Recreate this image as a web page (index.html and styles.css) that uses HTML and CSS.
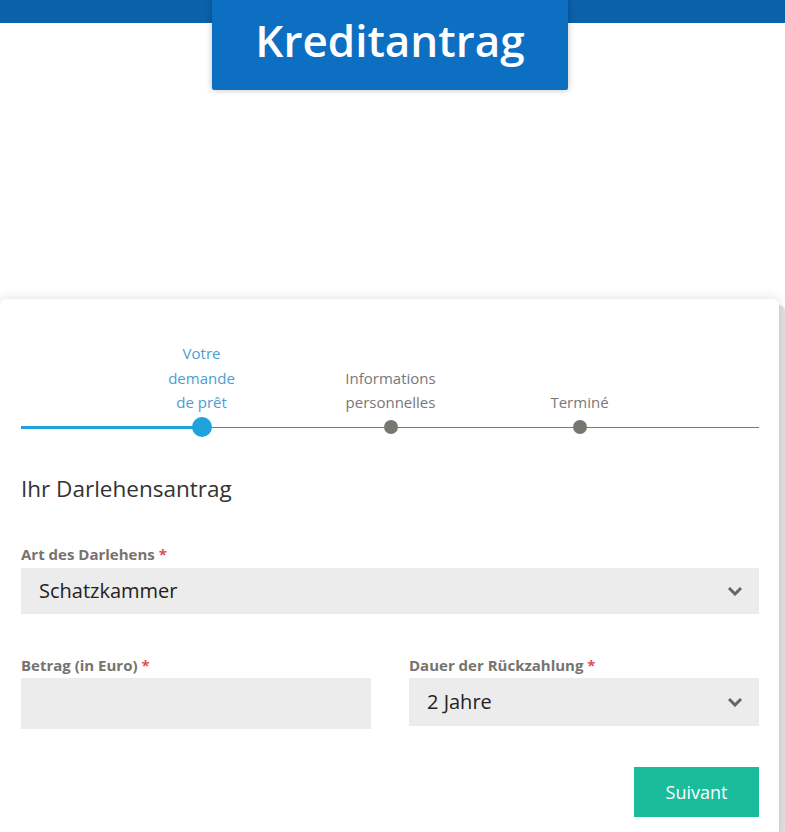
FILE: index.html
```html
<!DOCTYPE html>
<html lang="de">
<head>
    <meta charset="UTF-8">
    <meta name="viewport" content="width=device-width, initial-scale=1.0">
    <title>Kreditantrag</title>
    <link rel="stylesheet" href="styles.css">
</head>
<body>
    <div class="header">
        <h1 class="title-box">Kreditantrag</h1>
    </div>
    <div class="card">
        <div class="stepper">
            <div class="step active">
                <span class="step-label">Votre<br>demande<br>de prêt</span>
                <span class="dot-wrap"><span class="dot"></span></span>
            </div>
            <div class="step">
                <span class="step-label">Informations<br>personnelles</span>
                <span class="dot-wrap"><span class="dot"></span></span>
            </div>
            <div class="step">
                <span class="step-label">Terminé</span>
                <span class="dot-wrap"><span class="dot"></span></span>
            </div>
        </div>

        <h2 class="form-title">Ihr Darlehensantrag</h2>

        <div class="field">
            <label>Art des Darlehens <span class="req">*</span></label>
            <div class="select">
                <span>Schatzkammer</span>
                <svg class="chevron" width="16" height="10" viewBox="0 0 16 10"><path d="M2 2 L8 8 L14 2" fill="none" stroke="#666" stroke-width="3"/></svg>
            </div>
        </div>

        <div class="row">
            <div class="field">
                <label>Betrag (in Euro) <span class="req">*</span></label>
                <div class="input"></div>
            </div>
            <div class="field">
                <label>Dauer der Rückzahlung <span class="req">*</span></label>
                <div class="select small">
                    <span>2 Jahre</span>
                    <svg class="chevron" width="16" height="10" viewBox="0 0 16 10"><path d="M2 2 L8 8 L14 2" fill="none" stroke="#666" stroke-width="3"/></svg>
                </div>
            </div>
        </div>

        <div class="actions">
            <button class="next-button">Suivant</button>
        </div>
    </div>
</body>
</html>
```

FILE: styles.css
```css
body {
    margin: 0;
    font-family: "Open Sans", sans-serif;
    background-color: white;
    color: #333;
}
.header {
    display: flex;
    justify-content: center;
    padding-right: 5px;
    background: linear-gradient(to bottom, #0b61aa 0, #0b61aa 23px, white 23px);
}
.title-box {
    margin: 0;
    width: 356px;
    height: 90px;
    background-color: #0d6fc2;
    color: white;
    font-size: 44px;
    font-weight: 600;
    text-align: center;
    line-height: 80px;
    border-radius: 0 0 2px 2px;
    box-shadow: 0 0 6px rgba(0, 0, 0, 0.25);
}
.card {
    margin-top: 209px;
    width: 779px;
    box-sizing: border-box;
    padding: 42px 20px 20px 21px;
    background: white;
    border-radius: 6px;
    box-shadow: 0 0 12px rgba(0, 0, 0, 0.14), 6px 6px 0 #e2e2e2;
}
.stepper {
    position: relative;
    display: flex;
    padding-left: 86px;
    width: 738px;
    box-sizing: border-box;
}
.stepper::before {
    content: "";
    position: absolute;
    left: 0;
    right: 0;
    bottom: 9px;
    height: 1px;
    background: #777;
}
.stepper::after {
    content: "";
    position: absolute;
    left: 0;
    width: 180px;
    bottom: 8px;
    height: 3px;
    background: #1ea3dc;
}
.step {
    width: 189px;
    display: flex;
    flex-direction: column;
    align-items: center;
    justify-content: flex-end;
}
.step-label {
    font-size: 15px;
    line-height: 24.5px;
    text-align: center;
    color: #777;
}
.dot-wrap {
    height: 20px;
    margin-top: 2px;
    display: flex;
    align-items: center;
    position: relative;
    z-index: 1;
}
.dot {
    width: 14px;
    height: 14px;
    border-radius: 50%;
    background: #777671;
}
.step.active .step-label {
    color: #4a9ed2;
}
.step.active .dot {
    width: 20px;
    height: 20px;
    background: #1ea3dc;
}
.form-title {
    margin: 36px 0 40px;
    font-size: 22.5px;
    font-weight: 400;
    color: #333;
}
.field label {
    display: block;
    font-size: 15px;
    line-height: 20px;
    font-weight: 700;
    color: #77736e;
    margin-bottom: 4px;
}
.req {
    color: #d9534f;
}
.select {
    height: 46px;
    background: #ececec;
    display: flex;
    align-items: center;
    justify-content: space-between;
    padding: 0 16px 0 18px;
    font-size: 20px;
    color: #222;
}
.select.small {
    height: 48px;
}
.input {
    height: 51px;
    background: #ececec;
}
.row {
    display: grid;
    grid-template-columns: 350px 350px;
    column-gap: 38px;
    margin-top: 41px;
}
.row .field label {
    margin-bottom: 3px;
}
.actions {
    display: flex;
    justify-content: flex-end;
    margin-top: 38px;
}
.next-button {
    width: 125px;
    height: 50px;
    border: none;
    background: #1abc9c;
    color: white;
    font-family: "Open Sans", sans-serif;
    font-size: 18px;
    cursor: pointer;
}
```
